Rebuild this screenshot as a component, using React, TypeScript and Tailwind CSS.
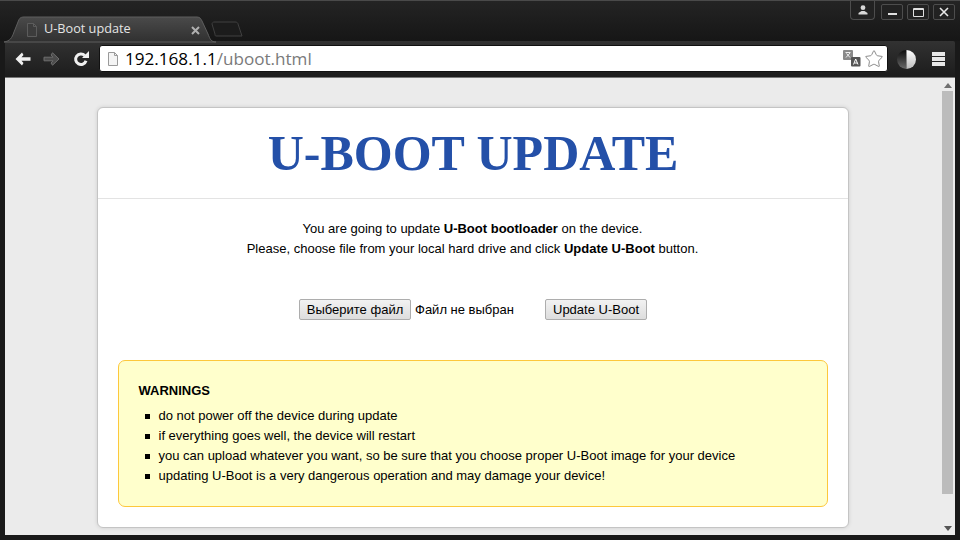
import { Star } from "lucide-react";

const WARNINGS = [
  "do not power off the device during update",
  "if everything goes well, the device will restart",
  "you can upload whatever you want, so be sure that you choose proper U-Boot image for your device",
  "updating U-Boot is a very dangerous operation and may damage your device!",
];

const TabShape = () => (
  <svg className="absolute left-0 top-0" width="250" height="42" viewBox="0 0 250 42">
    <defs>
      <linearGradient id="tabFill" x1="0" y1="0" x2="0" y2="1">
        <stop offset="0" stopColor="#4a4a4a" />
        <stop offset="1" stopColor="#303030" />
      </linearGradient>
    </defs>
    <path
      d="M4 41 C10 40 12 37 14 31 L18 21 C19 18 20 16 24 16 L197 16 C200 16 201 18 202 20 L208 33 C210 38 211 41 216 41 Z"
      fill="url(#tabFill)"
      stroke="#5e5e5e"
      strokeWidth="1"
    />
    <path
      d="M212 23 C212 22 213 21 214 21 L235 21 C237 21 238 22 238 23 L242 35 L216 35 C215 35 215 34 215 33 Z"
      fill="#1c1c1c"
      stroke="#404040"
      strokeWidth="1"
    />
  </svg>
);

const PageIcon = ({ stroke, fill }: { stroke: string; fill: string }) => (
  <svg width="12" height="14" viewBox="0 0 12 14" className="shrink-0">
    <path d="M1.5 .5 H7.5 L10.5 3.5 V13.5 H1.5 Z" fill={fill} stroke={stroke} />
    <path d="M7.5 .5 V3.5 H10.5" fill="none" stroke={stroke} />
  </svg>
);

const BackArrow = () => (
  <svg width="16" height="14" viewBox="0 0 16 14">
    <path d="M7 0.5 L0.5 7 L7 13.5 L8.5 11 L6.5 8.8 H15.5 V5.2 H6.5 L8.5 3 Z" fill="#f0f0f0" />
  </svg>
);

const ForwardArrow = () => (
  <svg width="17" height="14" viewBox="0 0 17 14">
    <path
      d="M9.5 0.8 L16 7 L9.5 13.2 L8 11 L10 8.8 H1 V5.2 H10 L8 3 Z"
      fill="#4c4c4c"
      stroke="#6e6e6e"
      strokeWidth="1"
    />
  </svg>
);

const Reload = () => (
  <svg width="16" height="16" viewBox="0 0 16 16">
    <path d="M11.8 4.6 A5.3 5.3 0 1 0 13 9.8" fill="none" stroke="#f0f0f0" strokeWidth="3" />
    <path d="M9 7 H16 V0 Z" fill="#f0f0f0" />
  </svg>
);

const CaptionButton = ({ children }: { children: React.ReactNode }) => (
  <div className="flex h-[16px] w-[22px] items-center justify-center rounded-[2px] border border-[#4d4d4d] bg-[#222222]">
    {children}
  </div>
);

const Translate = () => (
  <svg width="18" height="17" viewBox="0 0 18 17">
    <rect x="0" y="0" width="10" height="10" rx="1" fill="#8a8a8a" />
    <path d="M2.5 2.5 H7.5 M3 7.5 L7 3 M3.5 3.5 L7 7.5" stroke="#eeeeee" strokeWidth="1" fill="none" />
    <rect x="8" y="7" width="9.5" height="9.5" rx="1" fill="#555555" />
    <path d="M10.5 14.5 L12.7 9 L15 14.5 M11.3 13 H14.2" stroke="#ffffff" strokeWidth="1" fill="none" />
  </svg>
);

const Contrast = () => (
  <svg width="19" height="19" viewBox="0 0 19 19">
    <defs>
      <linearGradient id="darkHalf" x1="0" y1="0" x2="0" y2="1">
        <stop offset="0" stopColor="#0c0c0c" />
        <stop offset="1" stopColor="#6a6a6a" />
      </linearGradient>
      <linearGradient id="lightHalf" x1="0" y1="0" x2="0" y2="1">
        <stop offset="0" stopColor="#ffffff" />
        <stop offset="1" stopColor="#bcbcbc" />
      </linearGradient>
    </defs>
    <path d="M9.5 0 A9.5 9.5 0 0 0 9.5 19 Z" fill="url(#darkHalf)" />
    <path d="M9.5 0 A9.5 9.5 0 0 1 9.5 19 Z" fill="url(#lightHalf)" />
  </svg>
);

export default function App() {
  return (
    <div className="flex h-[540px] w-[960px] flex-col overflow-hidden bg-[#191919] font-['Liberation_Sans',sans-serif]">
      {/* Tab strip */}
      <div className="relative flex h-[41px] shrink-0 items-start justify-end border-t border-[#4a4a4a] bg-gradient-to-b from-[#242424] to-[#161616]">
        <TabShape />
        <div className="absolute left-[26px] top-[19px] flex w-[174px] items-start">
          <div className="mt-[3px]">
            <PageIcon stroke="#5c5c5c" fill="#3c3c3c" />
          </div>
          <span className="ml-[6px] flex-1 font-['Open_Sans',sans-serif] text-[12.7px] leading-[16px] text-[#e4e4e4]">
            U-Boot update
          </span>
          <svg className="mt-[6px]" width="9" height="9" viewBox="0 0 9 9">
            <path d="M1 1 L8 8 M8 1 L1 8" stroke="#b0b0b0" strokeWidth="2" />
          </svg>
        </div>
        <div className="mr-[5px] flex items-start">
          <div className="mr-[6px] flex h-[19px] w-[25px] items-center justify-center rounded-b-[4px] border border-t-0 border-[#4d4d4d] bg-[#222222]">
            <svg width="10" height="10" viewBox="0 0 10 10">
              <circle cx="5" cy="2.7" r="2.4" fill="#d8d8d8" />
              <path d="M0.5 9.5 V8 L3.5 6 H6.5 L9.5 8 V9.5 Z" fill="#d8d8d8" />
            </svg>
          </div>
          <div className="mt-[3px] flex gap-[4px]">
            <CaptionButton>
              <div className="mt-[4px] h-[2px] w-[9px] bg-[#e0e0e0]" />
            </CaptionButton>
            <CaptionButton>
              <div className="h-[9px] w-[11px] rounded-[1px] border border-t-2 border-[#e0e0e0]" />
            </CaptionButton>
            <CaptionButton>
              <svg width="10" height="10" viewBox="0 0 10 10">
                <path d="M1 1 L9 9 M9 1 L1 9" stroke="#e8e8e8" strokeWidth="1.6" />
              </svg>
            </CaptionButton>
          </div>
        </div>
      </div>

      {/* Toolbar */}
      <div className="mx-[5px] flex h-[36px] shrink-0 items-center rounded-t-[2px] bg-gradient-to-b from-[#323232] to-[#1c1c1c] pl-[10px] pr-[10px]">
        <BackArrow />
        <div className="ml-[12px]">
          <ForwardArrow />
        </div>
        <div className="ml-[13px]">
          <Reload />
        </div>
        <div className="mb-[1px] ml-[10px] flex h-[27px] min-w-0 flex-1 items-center rounded-[3px] border border-[#111111] bg-white pl-[7px] pr-[3px]">
          <PageIcon stroke="#9a9a9a" fill="#f4f4f4" />
          <span className="ml-[6px] flex-1 font-['Open_Sans',sans-serif] text-[17.1px] leading-[20px] text-[#7a7a7a]">
            <span className="text-black">192.168.1.1</span>/uboot.html
          </span>
          <Translate />
          <Star className="ml-[3px]" size={20} strokeWidth={1.2} color="#8c8c8c" />
        </div>
        <div className="ml-[9px]">
          <Contrast />
        </div>
        <div className="ml-[16px] flex w-[13px] flex-col gap-[1px]">
          <div className="h-[4px] bg-[#e8e8e8]" />
          <div className="h-[4px] bg-[#e8e8e8]" />
          <div className="h-[4px] bg-[#e8e8e8]" />
        </div>
      </div>

      {/* Page */}
      <div className="mx-[5px] mb-[5px] flex min-h-0 flex-1 border-t border-[#777777] bg-[#ebebeb]">
        <div className="min-w-0 flex-1 pl-[92px] pr-[91px] pt-[29px]">
          <div className="h-[421px] rounded-[6px] border border-[#c4c4c4] bg-white text-[13px] leading-[20px] text-black shadow-[0_0_4px_rgba(0,0,0,0.12)]">
            <h1 className="flex h-[91px] items-center justify-center border-b border-[#e3e3e3] font-['Liberation_Serif',serif] text-[50px] font-bold leading-none text-[#2450a8]">
              U-BOOT UPDATE
            </h1>
            <div className="pr-[1px] pt-[20px] text-center">
              <p>
                You are going to update <b>U-Boot bootloader</b> on the device.
              </p>
              <p>
                Please, choose file from your local hard drive and click <b>Update U-Boot</b> button.
              </p>
            </div>
            <div className="mt-[40px] flex h-[21px] items-center pl-[201px]">
              <div className="flex h-[21px] w-[112px] items-center justify-center rounded-[2px] border border-[#adadad] bg-gradient-to-b from-[#f2f2f2] to-[#dddddd]">
                Выберите файл
              </div>
              <span className="ml-[4px] w-[130px]">Файл не выбран</span>
              <div className="flex h-[21px] w-[102px] items-center justify-center rounded-[2px] border border-[#adadad] bg-gradient-to-b from-[#f2f2f2] to-[#dddddd]">
                Update U-Boot
              </div>
            </div>
            <div className="mx-[20px] mt-[40px] h-[147px] rounded-[7px] border border-[#fdc83c] bg-[#ffffcc] pl-[19.5px] pt-[20px]">
              <p className="mb-[5px] font-bold">WARNINGS</p>
              <ul className="list-none">
                {WARNINGS.map((w) => (
                  <li key={w} className="flex items-center">
                    <span className="ml-[6px] mr-[9px] h-[5px] w-[5px] bg-black" />
                    {w}
                  </li>
                ))}
              </ul>
            </div>
          </div>
        </div>

        {/* Scrollbar */}
        <div className="flex w-[15px] shrink-0 flex-col items-center bg-[#ececec] pt-[5px]">
          <div className="h-0 w-0 border-x-[4px] border-b-[5px] border-x-transparent border-b-[#707070]" />
          <div className="mt-[3px] h-[403px] w-[11px] bg-[#bcbcbc]" />
          <div className="mb-[4px] mt-auto h-0 w-0 border-x-[4px] border-t-[5px] border-x-transparent border-t-[#555555]" />
        </div>
      </div>
    </div>
  );
}
